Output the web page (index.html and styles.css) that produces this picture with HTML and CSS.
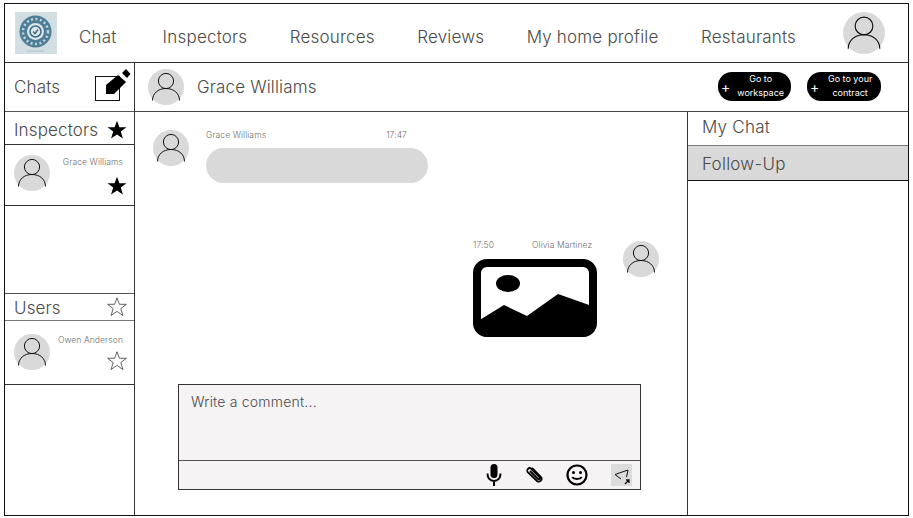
FILE: index.html
```html
<!DOCTYPE html>
<html lang="en">
<head>
    <meta charset="UTF-8">
    <meta name="viewport" content="width=device-width, initial-scale=1.0">
    <title>Chats</title>
    <link rel="stylesheet" href="styles.css">
</head>
<body>
    <svg class="defs" width="0" height="0">
        <symbol id="avatar" viewBox="0 0 36 36">
            <circle cx="18" cy="18" r="18" fill="#d9d9d9"/>
            <circle cx="18" cy="12" r="7.600" fill="none" stroke="#111" stroke-width="1"/>
            <path d="M4.500 31.500c0-7 5.500-12 13.500-12s13.500 5 13.500 12" fill="none" stroke="#111" stroke-width="1"/>
        </symbol>
        <symbol id="star" viewBox="0 0 20 20">
            <path d="M10 .8l2.400 6.500h7l-5.600 4.300 2.100 6.900L10 14.400l-5.900 4.100 2.100-6.900L.6 7.300h7z"/>
        </symbol>
    </svg>

    <div class="frame">
        <nav class="topnav">
            <svg class="logo" viewBox="0 0 42 42">
                <rect width="42" height="42" fill="#d3dee2"/>
                <circle cx="20.500" cy="19.500" r="16" fill="#4d7e95"/>
                <circle cx="20.500" cy="19.500" r="12.500" fill="none" stroke="#c3d6de" stroke-width="2.500" stroke-dasharray="2 2.500"/>
                <circle cx="20.500" cy="19.500" r="8.500" fill="#dde7ea"/>
                <circle cx="20.500" cy="19.500" r="5.500" fill="none" stroke="#3d6c83" stroke-width="1.500"/>
                <path d="M18 19.500l2 2 3-4" fill="none" stroke="#3d6c83" stroke-width="1.500"/>
                <path d="M12 39h17" stroke="#a9c6d2" stroke-width="1"/>
            </svg>
            <a class="nav-link first">Chat</a>
            <a class="nav-link second">Inspectors</a>
            <a class="nav-link">Resources</a>
            <a class="nav-link">Reviews</a>
            <a class="nav-link">My home profile</a>
            <a class="nav-link">Restaurants</a>
            <svg class="avatar big"><use href="#avatar"/></svg>
        </nav>

        <div class="body-row">
            <aside class="sidebar">
                <div class="chats-head">
                    <span class="title">Chats</span>
                    <span class="new-chat">
                        <svg class="pencil" viewBox="0 0 26 30">
                            <path d="M1 26v-9L13 7l8 7L9 26z"/>
                            <path d="M17 5l4-4 4.500 5-3.500 4z"/>
                        </svg>
                    </span>
                </div>
                <div class="list-head inspectors-head">
                    <span class="title">Inspectors</span>
                    <svg class="star"><use href="#star"/></svg>
                </div>
                <div class="person inspectors-person">
                    <svg class="avatar"><use href="#avatar"/></svg>
                    <div class="person-info">
                        <span class="small-text">Grace Williams</span>
                        <svg class="star"><use href="#star"/></svg>
                    </div>
                </div>
                <div class="list-gap"></div>
                <div class="list-head users-head">
                    <span class="title">Users</span>
                    <svg class="star empty"><use href="#star"/></svg>
                </div>
                <div class="person users-person">
                    <svg class="avatar"><use href="#avatar"/></svg>
                    <div class="person-info">
                        <span class="small-text">Owen Anderson</span>
                        <svg class="star empty"><use href="#star"/></svg>
                    </div>
                </div>
            </aside>

            <div class="main">
                <header class="chat-head">
                    <svg class="avatar"><use href="#avatar"/></svg>
                    <span class="title chat-name">Grace Williams</span>
                    <div class="actions">
                        <button class="pill"><span class="plus">+</span><span class="pill-text">Go to<br>workspace</span></button>
                        <button class="pill wide"><span class="plus">+</span><span class="pill-text">Go to your<br>contract</span></button>
                    </div>
                </header>

                <div class="content">
                    <section class="messages">
                        <div class="message incoming">
                            <svg class="avatar"><use href="#avatar"/></svg>
                            <div class="bubble-wrap">
                                <div class="meta"><span class="small-text">Grace Williams</span><span class="small-text time">17:47</span></div>
                                <div class="bubble"></div>
                            </div>
                        </div>

                        <div class="message outgoing">
                            <div class="picture-wrap">
                                <div class="meta"><span class="small-text">17:50</span><span class="small-text sender">Olivia Martinez</span></div>
                                <svg class="picture" viewBox="0 0 124 78">
                                    <rect x="4" y="4" width="116" height="70" rx="10" fill="#fff" stroke="#000" stroke-width="8"/>
                                    <ellipse cx="35" cy="24.500" rx="12" ry="8.500"/>
                                    <path d="M5 62l26-16 23 11 31-22 34 12v22a9 9 0 0 1-9 9H14a9 9 0 0 1-9-9z"/>
                                </svg>
                            </div>
                            <svg class="avatar"><use href="#avatar"/></svg>
                        </div>

                        <div class="composer">
                            <div class="composer-input">Write a comment...</div>
                            <div class="composer-tools">
                                <svg class="tool mic" viewBox="0 0 18 24">
                                    <rect x="5.500" y="1" width="7" height="14" rx="3.500"/>
                                    <path d="M2.500 10.500c0 4.500 2.500 7.500 6.500 7.500s6.500-3 6.500-7.500M9 18v5" fill="none" stroke="#000" stroke-width="2"/>
                                </svg>
                                <svg class="tool clip" viewBox="0 0 20 20">
                                    <path d="M8 3l9 9c2 2.500-1.500 6-4 4L3.500 7C2 5 5 2 7 3.500l8.500 8.500c1 1.500-.5 2.500-1.500 2L6 6" fill="none" stroke="#000" stroke-width="1.800"/>
                                </svg>
                                <svg class="tool smile" viewBox="0 0 22 22">
                                    <circle cx="11" cy="11" r="9.500" fill="none" stroke="#000" stroke-width="2.200"/>
                                    <circle cx="7.500" cy="8.500" r="1.500"/>
                                    <circle cx="14.500" cy="8.500" r="1.500"/>
                                    <path d="M6.500 13c1 2.500 8 2.500 9 0" fill="none" stroke="#000" stroke-width="2"/>
                                </svg>
                                <span class="send">
                                    <svg class="send-icon" viewBox="0 0 21 22">
                                        <path d="M10 15L4 10.500 17 6l-1.500 7" fill="none" stroke="#111" stroke-width="1"/>
                                        <path d="M14 20l4-4m-3 0h3v3" fill="none" stroke="#111" stroke-width="1.300"/>
                                    </svg>
                                </span>
                            </div>
                        </div>
                    </section>

                    <aside class="panel">
                        <div class="panel-tab">My Chat</div>
                        <div class="panel-tab active">Follow-Up</div>
                    </aside>
                </div>
            </div>
        </div>
    </div>
</body>
</html>
```

FILE: styles.css
```css
* {
    margin: 0;
    padding: 0;
    box-sizing: border-box;
}

body {
    font-family: Inter, "Liberation Sans", sans-serif;
    font-weight: 300;
    background-color: #fff;
    color: #4a4a4a;
}

.defs {
    display: block;
    height: 0;
}

.frame {
    display: flex;
    flex-direction: column;
    width: 905px;
    height: 513px;
    margin: 3px 0 0 4px;
    border: 1px solid #111;
}

/* top bar */
.topnav {
    display: flex;
    align-items: center;
    height: 59px;
    padding-left: 10px;
    border-bottom: 1px solid #333;
    white-space: nowrap;
}

.logo {
    width: 42px;
    height: 42px;
    filter: blur(0.5px);
}

.nav-link {
    margin-left: 42.4px;
    padding-top: 8px;
    font-size: 17px;
    letter-spacing: 0.2px;
}

.nav-link.first {
    margin-left: 22px;
}

.nav-link.second {
    margin-left: 46px;
}

.avatar {
    flex: none;
    width: 36px;
    height: 36px;
}

.avatar.big {
    width: 42px;
    height: 42px;
    margin-left: 47px;
}

.body-row {
    display: flex;
    flex: 1;
    min-height: 0;
}

/* left column */
.sidebar {
    display: flex;
    flex-direction: column;
    width: 130px;
    border-right: 1px solid #333;
}

.title {
    font-size: 17px;
    letter-spacing: 0.15px;
}

.chats-head {
    display: flex;
    justify-content: space-between;
    align-items: center;
    height: 49px;
    padding: 0 14px 0 9px;
    border-bottom: 1px solid #555;
}

.new-chat {
    position: relative;
    width: 25px;
    height: 25px;
    margin-top: 3px;
    border: 1px solid #111;
}

.pencil {
    position: absolute;
    left: 9px;
    top: -9px;
    width: 26px;
    height: 30px;
}

.list-head {
    display: flex;
    justify-content: space-between;
    align-items: center;
    padding: 0 7px 0 9px;
    border-bottom: 1px solid #333;
}

.inspectors-head {
    height: 33px;
    padding-top: 3px;
}

.users-head {
    height: 28px;
    border-top: 1px solid #555;
    border-bottom-color: #777;
}

.users-head .title {
    margin-top: 2px;
}

.star {
    flex: none;
    width: 20px;
    height: 20px;
    fill: #000;
}

.star.empty {
    fill: #fff;
    stroke: #222;
    stroke-width: 0.7;
}

.person {
    display: flex;
    padding: 10px 7px 0 9px;
    border-bottom: 1px solid #333;
}

.inspectors-person {
    height: 61px;
}

.users-person {
    height: 64px;
    padding-top: 13px;
}

.person-info {
    display: flex;
    flex: 1;
    flex-direction: column;
    align-items: flex-end;
}

.small-text {
    font-size: 8.5px;
    line-height: 10px;
    letter-spacing: 0.1px;
    color: #6e6e6e;
    white-space: nowrap;
}

.person-info .small-text {
    margin-right: 4px;
}

.inspectors-person .small-text {
    margin-top: 2px;
}

.inspectors-person .star {
    margin-top: 9px;
}

.users-person .small-text {
    margin-top: 1px;
}

.users-person .star {
    margin-top: 6px;
}

.list-gap {
    height: 87px;
}

/* conversation */
.main {
    display: flex;
    flex: 1;
    flex-direction: column;
    min-width: 0;
}

.chat-head {
    display: flex;
    align-items: center;
    height: 49px;
    padding-left: 13px;
    border-bottom: 1px solid #444;
}

.chat-name {
    margin-left: 13px;
}

.actions {
    display: flex;
    gap: 16px;
    margin-left: auto;
    margin-right: 27px;
    margin-bottom: 2px;
}

.pill {
    display: flex;
    align-items: center;
    width: 73px;
    height: 29px;
    padding-left: 3px;
    border: none;
    border-radius: 14px;
    background-color: #000;
    color: #fff;
    font-family: inherit;
}

.pill.wide {
    width: 74px;
}

.plus {
    font-size: 14px;
    font-weight: 400;
    line-height: 12px;
    margin-top: 2px;
}

.pill-text {
    flex: 1;
    font-size: 9px;
    font-weight: 400;
    line-height: 14px;
    text-align: center;
}

.content {
    display: flex;
    flex: 1;
    min-height: 0;
}

.messages {
    display: flex;
    flex: 1;
    flex-direction: column;
    min-width: 0;
    padding: 18px 0 25px;
}

.message {
    display: flex;
}

.incoming {
    gap: 17px;
    padding-left: 18px;
}

.bubble-wrap {
    width: 222px;
}

.meta {
    display: flex;
    height: 17px;
}

.time {
    margin-left: 120px;
}

.bubble {
    height: 35px;
    margin-top: 1px;
    border-radius: 18px;
    background-color: #d9d9d9;
}

.outgoing {
    justify-content: flex-end;
    gap: 26px;
    margin-top: 58px;
    padding-right: 28px;
}

.picture-wrap {
    width: 124px;
}

.picture-wrap .meta {
    height: 19px;
    margin-top: -1px;
}

.sender {
    margin-left: 38px;
}

.picture {
    display: block;
    width: 124px;
    height: 78px;
}

/* comment box */
.composer {
    width: 463px;
    margin: auto 0 0 43px;
    background-color: #f5f3f4;
    border: 1px solid #333;
}

.composer-input {
    height: 76px;
    padding: 8px 12px;
    font-size: 14px;
    line-height: 17px;
    letter-spacing: 0.2px;
    border-bottom: 1px solid #555;
}

.composer-tools {
    display: flex;
    align-items: center;
    justify-content: flex-end;
    height: 28px;
    padding-right: 8px;
}

.tool {
    flex: none;
}

.mic {
    width: 18px;
    height: 24px;
}

.clip {
    width: 20px;
    height: 20px;
    margin-left: 21px;
}

.smile {
    width: 22px;
    height: 22px;
    margin-left: 22px;
}

.send {
    display: flex;
    margin-left: 23px;
    background-color: #dcdcdc;
}

.send-icon {
    width: 21px;
    height: 22px;
}

/* right column */
.panel {
    width: 221px;
    border-left: 1px solid #333;
}

.panel-tab {
    height: 34px;
    padding: 5px 14px 0;
    font-size: 17px;
    letter-spacing: 0.25px;
    border-bottom: 1px solid #777;
}

.panel-tab.active {
    height: 35px;
    padding-top: 8px;
    background-color: #d9d9d9;
    border-bottom-color: #111;
}
```
